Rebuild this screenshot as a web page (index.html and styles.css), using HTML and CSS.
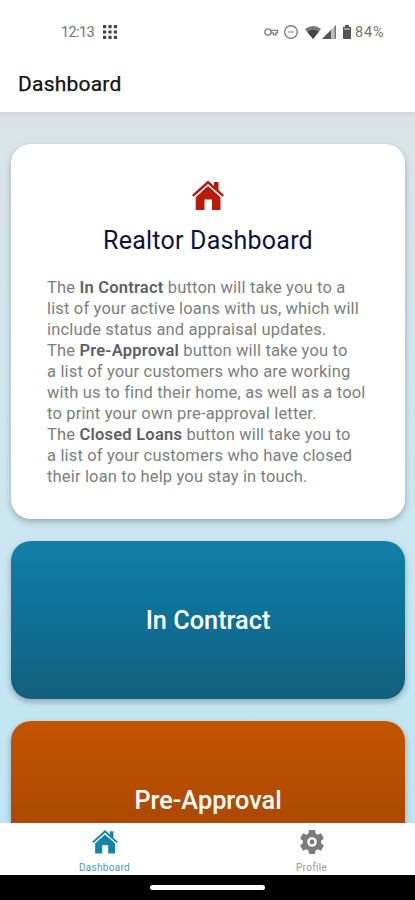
FILE: index.html
```html
<!DOCTYPE html>
<html lang="en">
<head>
<meta charset="utf-8">
<title>Dashboard</title>
<link rel="stylesheet" href="styles.css">
</head>
<body>
<svg class="defs" aria-hidden="true">
  <symbol id="house" viewBox="0 0 32 30">
    <path d="M22 1.5h4.5v9L22 6z"/>
    <path d="M16 0 32 14.6l-1.6 1.7L16 3.5 1.6 16.3 0 14.6z"/>
    <path d="M16 5.5 28.5 16.7V29.5H20V19h-7.5v10.5H3.7V16.7z"/>
  </symbol>
</svg>
<div class="screen">
  <div class="status">
    <span class="clock">12:13</span>
    <svg class="grid-icon" viewBox="0 0 15 15"><path d="M0 0h3.4v3.4H0zM5.8 0h3.4v3.4H5.8zM11.6 0H15v3.4h-3.4zM0 5.8h3.4v3.4H0zM5.8 5.8h3.4v3.4H5.8zM11.6 5.8H15v3.4h-3.4zM0 11.6h3.4V15H0zM5.8 11.6h3.4V15H5.8zM11.6 11.6H15V15h-3.4z"/></svg>
    <svg class="signals" viewBox="0 0 90 18">
      <g fill="none" stroke="#808080" stroke-width="1.4">
        <circle cx="4" cy="9" r="3.1"/>
        <path d="M7 7.4h6.5v2.5H12v2H9.5v-2H7"/>
        <circle cx="27" cy="9" r="6.3"/>
        <path stroke="#aaa" d="M24 9h6"/>
      </g>
      <path fill="#777" d="M41 6Q49 0 57 6l-8 10z"/>
      <path fill="#444" d="M43.3 8.8Q49 5 54.7 8.8L49 16z"/>
      <path fill="#bbb" d="M72 2v14H58z"/>
      <path fill="#555" d="M67 7v9h-9z"/>
      <path fill="#777" d="M72 2v14h-1.4V3.4z"/>
      <path fill="#555" d="M81 2h4v2h2v12h-8V4h2z"/>
      <path fill="#aaa" d="M80.3 5h5.4v1.8h-5.4z"/>
    </svg>
    <span class="battery">84%</span>
  </div>
  <header class="appbar"><h1>Dashboard</h1></header>
  <main class="content">
    <section class="card">
      <svg class="card-icon"><use href="#house"/></svg>
      <h2>Realtor Dashboard</h2>
      <p>The <b>In Contract</b> button will take you to a<br>list of your active loans with us, which will<br>include status and appraisal updates.<br>The <b>Pre-Approval</b> button will take you to<br>a list of your customers who are working<br>with us to find their home, as well as a tool<br>to print your own pre-approval letter.<br>The <b>Closed Loans</b> button will take you to<br>a list of your customers who have closed<br>their loan to help you stay in touch.</p>
    </section>
    <div class="tile contract">In Contract</div>
    <div class="tile approval">Pre-Approval</div>
  </main>
  <nav class="tabs">
    <div class="tab active"><svg class="tab-icon house-icon"><use href="#house"/></svg><span>Dashboard</span></div>
    <div class="tab"><svg class="tab-icon" viewBox="2 2 20 20"><path fill-rule="evenodd" d="M9.5 2h5l.5 3 1.6.9 2.9-1.1 2.4 4.2-2.3 2v2l2.3 2-2.4 4.2-2.9-1.1-1.6.9-.5 3h-5L9 19l-1.6-.9-2.9 1.1L2.1 15l2.3-2v-2L2.1 9l2.4-4.2 2.9 1.1L9 5zM12 8a4 4 0 1 0 0 8 4 4 0 0 0 0-8z"/><circle cx="12" cy="12" r="2"/></svg><span>Profile</span></div>
  </nav>
  <div class="gesture"><i></i></div>
</div>
</body>
</html>
```
FILE: styles.css
```css
* { box-sizing: border-box; }
body { margin: 0; font-family: Roboto, "Liberation Sans", sans-serif; }
h1, h2, p { margin: 0; }
.defs { display: none; }
.screen { width: 415px; height: 900px; display: flex; flex-direction: column; overflow: hidden; background: #fff; }
.status { height: 56px; padding: 8px 29px 0 61px; display: flex; align-items: center; flex: none; color: #747474; font-size: 14.5px; }
.clock { width: 42px; letter-spacing: -.6px; }
.grid-icon { width: 14px; height: 14px; fill: #444; }
.signals { width: 90px; height: 18px; margin-left: 147px; }
.battery { margin-left: 1px; letter-spacing: .9px; }
.appbar { height: 56px; flex: none; display: flex; align-items: center; padding-left: 18px; }
h1 { font-size: 21px; font-weight: 400; letter-spacing: .22px; color: #111; -webkit-text-stroke: .25px #111; }
.content { height: 711px; flex: none; overflow: hidden; padding: 32px 10px 0 11px; display: flex; flex-direction: column; gap: 22px; background: linear-gradient(#d3d8da 0, #dce2e6 5px, #d9e4e9 30px, #cce7f0 410px, #bee5f4 100%); }
.card { height: 375.4px; flex: none; border-radius: 20px; background: #fff; box-shadow: 0 3px 6px rgba(0,0,0,.25); display: flex; flex-direction: column; align-items: center; padding-top: 36px; }
.card-icon { width: 32px; height: 31px; fill: #b91b0b; }
h2 { margin-top: 13px; font-size: 25px; line-height: 33px; font-weight: 400; letter-spacing: .22px; color: #10113f; }
.card p { align-self: stretch; margin: 19.5px 0 0 36px; font-size: 16.5px; line-height: 21.05px; letter-spacing: .16px; color: #7c7e80; white-space: nowrap; }
.card b { font-weight: 600; letter-spacing: .23px; color: #5c6066; }
.tile { height: 158px; flex: none; border-radius: 20px; display: flex; align-items: center; justify-content: center; color: #fff; font-size: 25.3px; font-weight: 500; box-shadow: 0 3px 6px rgba(0,0,0,.28); }
.contract { background: linear-gradient(#137fa7, #0d769d 32%, #135f7e); }
.approval { background: linear-gradient(#c45400, #9d4300); }
.tabs { height: 52px; flex: none; display: flex; background: #fff; padding-left: 1px; }
.tab { flex: 1; display: flex; flex-direction: column; align-items: center; padding-top: 7px; color: #999; font-size: 10px; line-height: 12px; letter-spacing: .3px; }
.tab-icon { width: 24px; height: 24px; margin-bottom: 8px; fill: #7b7b7b; }
.tab.active { color: #4d9caf; }
.house-icon { width: 26px; fill: #1682a9; }
.gesture { height: 25px; flex: none; background: #000; display: flex; justify-content: center; align-items: center; }
.gesture i { width: 115px; height: 5px; border-radius: 3px; background: #fff; }
```
